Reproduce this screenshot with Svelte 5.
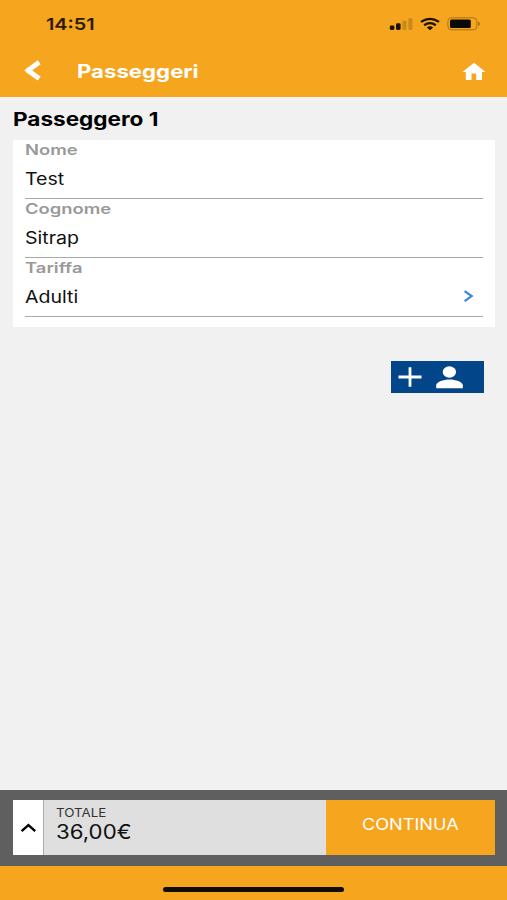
<script lang="ts">
  type Field = { label: string; value: string; picker?: boolean };

  const fields: Field[] = [
    { label: "Nome", value: "Test" },
    { label: "Cognome", value: "Sitrap" },
    { label: "Tariffa", value: "Adulti", picker: true },
  ];
</script>

<div class="screen">
  <header>
    <div class="status">
      <span class="wide time">14:51</span>
      <div class="indicators">
        <svg width="24" height="14" viewBox="0 0 24 14">
          <rect x="0.8" y="8.4" width="4.6" height="4.6" rx="1.4" fill="#1c1204" />
          <rect x="7" y="6.2" width="4.6" height="6.8" rx="1.4" fill="#1c1204" />
          <rect x="13.4" y="3.7" width="4.2" height="9.3" rx="1.4" fill="#c98a1c" />
          <rect x="19.3" y="1.2" width="4.2" height="11.8" rx="1.4" fill="#c98a1c" />
        </svg>
        <svg class="wifi" width="20" height="14" viewBox="0 0 20 14">
          <g fill="none" stroke="#1c1204" stroke-width="2.3">
            <path d="M1 4.9Q10-1.3 19 4.9" />
            <path d="M4.2 8.2Q10 4 15.8 8.2" />
          </g>
          <path d="M6.8 10.5Q10 8.2 13.2 10.5L10 13.2Z" fill="#1c1204" />
        </svg>
        <svg class="battery" width="34" height="14" viewBox="0 0 34 14">
          <rect x="0.9" y="0.8" width="29" height="12" rx="3.6" fill="none" stroke="#a8741b" />
          <rect x="3" y="2.6" width="20.8" height="8.4" rx="1.6" fill="#0c0905" />
          <path d="M31 4.6Q33 5.6 33 6.8T31 9Z" fill="#a8741b" />
        </svg>
      </div>
    </div>
    <nav>
      <button type="button" class="back" aria-label="Indietro">
        <svg width="20" height="24" viewBox="0 0 20 24">
          <path
            d="M16.2 3.2L4.9 11.4L16.2 19.6"
            fill="none"
            stroke="#fff"
            stroke-width="5"
            stroke-linejoin="bevel"
          />
          <path d="M1.2 11.4L5 8.4V14.4Z" fill="#fff" />
        </svg>
      </button>
      <h1 class="wide">Passeggeri</h1>
      <button type="button" class="home" aria-label="Home">
        <svg width="24" height="19" viewBox="0 0 24 19">
          <path d="M12 0.8L0.5 10H3.8V18H9.5V11.6H14.2V18H20V10H23.5Z" fill="#fff" />
        </svg>
      </button>
    </nav>
  </header>

  <main>
    <h2 class="wide">Passeggero 1</h2>
    <section class="card">
      {#each fields as field}
        <div class="field">
          <span class="wide label">{field.label}</span>
          <span class="wide value">{field.value}</span>
          {#if field.picker}
            <svg class="chevron" width="12" height="14" viewBox="0 0 12 14">
              <path d="M1.6 1.1L8.6 6.1L1.6 11.1" fill="none" stroke="#4285dc" stroke-width="2.3" />
            </svg>
          {/if}
        </div>
      {/each}
    </section>
    <button type="button" class="add" aria-label="Aggiungi passeggero">
      <svg width="24" height="20" viewBox="0 0 24 20">
        <path d="M0.5 10H23.5M12 0.3V19.7" stroke="#fff" stroke-width="2.8" />
      </svg>
      <svg width="27" height="23" viewBox="0 0 27 23">
        <ellipse cx="13.4" cy="6" rx="6.7" ry="5.7" fill="#fff" />
        <path d="M0.2 22.3V19.3C0.2 16 7.6 13.6 13.5 13.6S26.8 16 26.8 19.3V22.3Z" fill="#fff" />
      </svg>
    </button>
  </main>

  <footer>
    <div class="bar">
      <button type="button" class="expand" aria-label="Dettagli">
        <svg width="16" height="10" viewBox="0 0 16 10">
          <path d="M1.6 8.2L8.4 2.2L15.2 8.2" fill="none" stroke="#000" stroke-width="2.4" />
        </svg>
      </button>
      <div class="total">
        <span class="wide caption">TOTALE</span>
        <span class="wide amount">36,00€</span>
      </div>
      <button type="button" class="continue"><span class="wide">CONTINUA</span></button>
    </div>
  </footer>
  <div class="safe-area"><i></i></div>
</div>

<style>
  :global(body) {
    margin: 0;
  }

  .screen {
    display: flex;
    flex-direction: column;
    width: 507px;
    height: 900px;
    overflow: hidden;
    background: #f1f1f1;
    color: #111;
    font-family: Inter, "Liberation Sans", sans-serif;
  }

  button {
    display: flex;
    align-items: center;
    justify-content: center;
    margin: 0;
    padding: 0;
    border: 0;
    background: none;
    font: inherit;
  }

  svg {
    display: block;
    flex: none;
  }

  h1,
  h2 {
    margin: 0;
  }

  .wide {
    display: block;
    width: max-content;
    white-space: nowrap;
    transform: scaleX(1.2);
    transform-origin: left center;
  }

  header {
    height: 97px;
    background: #f6a51e;
  }

  .status {
    display: flex;
    align-items: center;
    justify-content: space-between;
    height: 47px;
    padding: 0 26px 0 46px;
    box-sizing: border-box;
  }

  .time {
    color: #2b1b04;
    font-size: 16.5px;
    font-weight: 600;
  }

  .indicators {
    display: flex;
  }

  .wifi {
    margin-left: 7px;
  }

  .battery {
    margin-left: 7px;
  }

  nav {
    display: flex;
    align-items: center;
    height: 48px;
    padding: 0 21px 0 23px;
  }

  h1 {
    margin: 0 0 0 34px;
    color: #fff;
    font-size: 18.5px;
    font-weight: 700;
    line-height: 24px;
  }

  .home {
    margin-left: auto;
  }

  main {
    flex: 1;
    padding: 0 12px 0 13px;
  }

  h2 {
    padding: 11px 0 8px;
    font-size: 18.8px;
    font-weight: 700;
    line-height: 24px;
    color: #000;
  }

  .card {
    padding: 0 12px 10px;
    background: #fff;
  }

  .field {
    display: grid;
    grid-template-columns: 1fr auto;
    grid-template-rows: 18px 40px;
    align-items: center;
    border-bottom: 1px solid #a9a9a9;
  }

  .label {
    grid-column: 1 / -1;
    color: #999;
    font-size: 14.5px;
    font-weight: 600;
    transform: scaleX(1.27);
  }

  .value {
    padding-top: 2px;
    font-size: 17px;
    transform: scaleX(1.15);
  }

  .chevron {
    margin: 2px 8px 0 0;
  }

  .add {
    gap: 14px;
    width: 93px;
    height: 32px;
    margin: 34px 11px 0 auto;
    padding-right: 14px;
    box-sizing: border-box;
    background: #034589;
  }

  footer {
    height: 76px;
    padding: 10px 12px 11px 13px;
    box-sizing: border-box;
    background: #5f5f5f;
  }

  .bar {
    display: flex;
    height: 55px;
  }

  .expand {
    width: 31px;
    background: #fff;
    border-right: 1px solid #aaa;
  }

  .total {
    flex: 1;
    padding: 6px 0 0 12px;
    background: #dfdfdf;
  }

  .caption {
    font-size: 11.2px;
    line-height: 14px;
    color: #333;
    transform: scaleX(1.19);
  }

  .amount {
    font-size: 19.5px;
    line-height: 25px;
    transform: scaleX(1.14);
  }

  .continue {
    width: 169px;
    padding-bottom: 7px;
    box-sizing: border-box;
    background: #f6a51e;
    color: #fff;
    font-size: 15.5px;
  }

  .continue .wide {
    transform: scaleX(1.17);
    transform-origin: center;
  }

  .safe-area {
    display: flex;
    justify-content: center;
    height: 34px;
    background: #f6a51e;
  }

  .safe-area i {
    width: 181px;
    height: 5px;
    margin-top: 21px;
    border-radius: 3px;
    background: #110c05;
  }
</style>
